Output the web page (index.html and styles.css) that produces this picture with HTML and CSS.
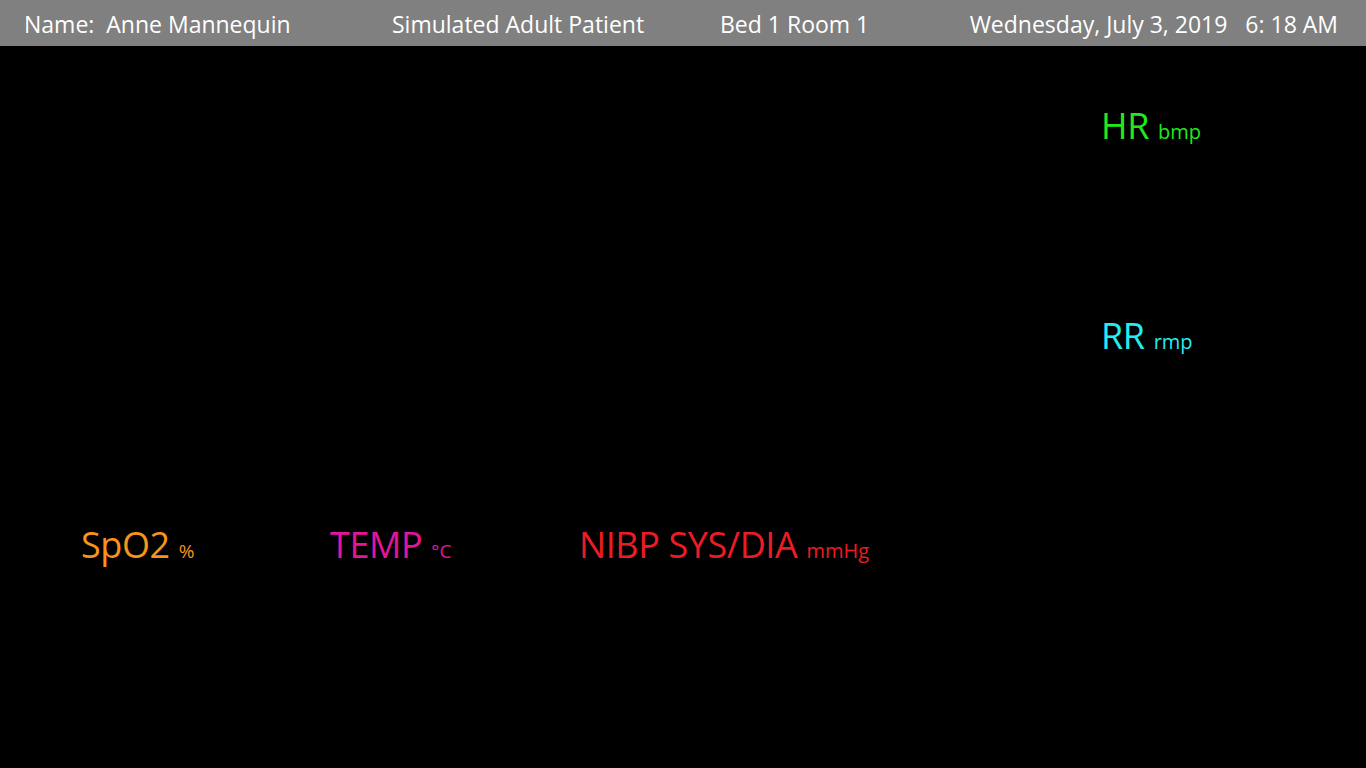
FILE: index.html
```html
<!DOCTYPE html>
<html lang="en">
<head>
<meta charset="utf-8">
<title>Patient Monitor</title>
<link rel="stylesheet" href="styles.css">
</head>
<body>
<header class="topbar">
  <div class="tb-name">Name:&nbsp; Anne Mannequin</div>
  <div class="tb-type">Simulated Adult Patient</div>
  <div class="tb-bed">Bed 1 Room 1</div>
  <div class="tb-date">Wednesday, July 3, 2019 &nbsp; 6: 18 AM</div>
</header>
<main class="monitor">
  <section class="side">
    <div class="vital hr"><span class="label">HR</span><span class="unit">bmp</span></div>
    <div class="vital rr"><span class="label">RR</span><span class="unit">rmp</span></div>
  </section>
  <section class="bottom">
    <div class="vital spo2"><span class="label">SpO2</span><span class="unit u-pct">%</span></div>
    <div class="vital temp"><span class="label">TEMP</span><span class="unit u-deg">°C</span></div>
    <div class="vital nibp"><span class="label">NIBP SYS/DIA</span><span class="unit">mmHg</span></div>
  </section>
</main>
</body>
</html>
```
FILE: styles.css
```css
* { box-sizing: border-box; }
html, body { margin: 0; padding: 0; }
body {
  width: 1366px;
  height: 768px;
  background: #000;
  font-family: "Open Sans", "Noto Sans", sans-serif;
  overflow: hidden;
}
.topbar {
  height: 46px;
  background: #808080;
  color: #fff;
  display: flex;
  align-items: center;
  padding: 2px 28px 0 24px;
  font-size: 23px;
  white-space: nowrap;
}
.tb-name { width: 368px; }
.tb-type { width: 328px; }
.tb-bed { width: 248px; }
.tb-date { flex: 1; text-align: right; }

.monitor { display: flex; flex-direction: column; }
.side {
  padding-left: 1101px;
  padding-top: 60px;
  display: flex;
  flex-direction: column;
  gap: 163px;
}
.vital { white-space: nowrap; line-height: 40px; }
.label { font-size: 36px; letter-spacing: -0.4px; }
.unit { font-size: 20px; margin-left: 9px; }
.bottom {
  display: grid;
  grid-template-columns: 249px 249px 1fr;
  padding-left: 81px;
  margin-top: 162px;
}
.hr { color: #22e81c; }
.rr { color: #22eef0; }
.spo2 { color: #f7941d; }
.temp { color: #e6149b; }
.nibp { color: #ed1c24; }
.u-pct { font-size: 19px; }
.u-deg { font-size: 19px; }
```
